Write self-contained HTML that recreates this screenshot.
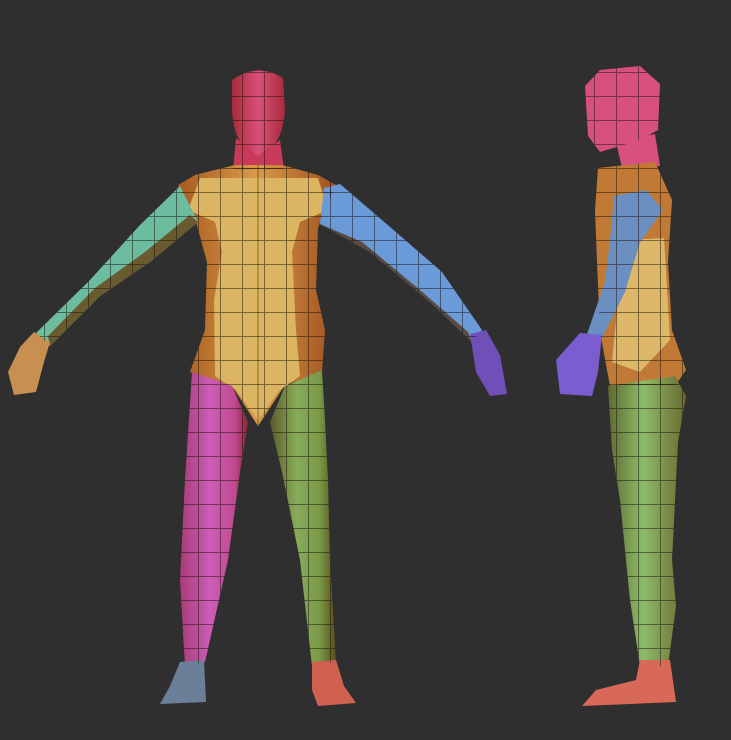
<!DOCTYPE html>
<html><head><meta charset="utf-8"><style>
html,body{margin:0;padding:0;background:#2f2f2f;}
svg{display:block;}
</style></head><body>
<svg width="731" height="740" viewBox="0 0 731 740" xmlns="http://www.w3.org/2000/svg">
<defs>
<pattern id="g" width="22" height="24" patternUnits="userSpaceOnUse">
<path d="M0 0.5H22M0.5 0V24" stroke="#1a1008" stroke-width="1" opacity="0.5" fill="none"/>
</pattern>
<linearGradient id="tor" x1="0" x2="1"><stop offset="0" stop-color="#a85a22"/><stop offset="0.5" stop-color="#d89a48"/><stop offset="1" stop-color="#a0501e"/></linearGradient>
<linearGradient id="mag" x1="0" x2="1"><stop offset="0" stop-color="#a83c78"/><stop offset="0.45" stop-color="#cc5cb8"/><stop offset="0.8" stop-color="#c04a90"/><stop offset="1" stop-color="#8a2432"/></linearGradient>
<linearGradient id="grn" x1="0" x2="1"><stop offset="0" stop-color="#5a5a2a"/><stop offset="0.4" stop-color="#88ac5a"/><stop offset="0.75" stop-color="#7a9a48"/><stop offset="1" stop-color="#5a4a1a"/></linearGradient>
<linearGradient id="sgrn" x1="0" x2="1"><stop offset="0" stop-color="#5e6a30"/><stop offset="0.45" stop-color="#8cbc6a"/><stop offset="1" stop-color="#6a6a2e"/></linearGradient>
<linearGradient id="hd" x1="0" x2="1"><stop offset="0" stop-color="#a82a3a"/><stop offset="0.5" stop-color="#d8507a"/><stop offset="1" stop-color="#a82a3a"/></linearGradient>
</defs>
<rect width="731" height="740" fill="#2f2f2f"/>
<g>
<path d="M232,80 Q258,62 283,78 L285,112 Q282,140 270,148 L258,156 L246,148 Q234,138 232,112 Z" fill="url(#hd)"/>
<path d="M236,138 L258,156 L280,140 L284,170 L233,170 Z" fill="#c83a58"/>
<path d="M178,185 L195,175 L235,165 L282,165 L318,175 L336,185 L325,210 L318,228 L316,290 L325,330 L322,372 L285,385 L258,426 L232,386 L190,372 L205,330 L207,262 L196,222 Z" fill="url(#tor)"/>
<path d="M200,178 L318,178 L328,210 L300,222 L292,252 L296,330 L300,376 L280,390 L258,420 L236,390 L215,376 L214,300 L222,252 L215,222 L188,210 Z" fill="#dcb562"/>
<path d="M180,186 L198,222 L150,262 L100,296 L50,346 L36,333 L90,280 L140,225 Z" fill="#6cbca0"/>
<path d="M198,222 L150,262 L100,296 L50,346 L48,336 L95,288 L145,252 L190,215 Z" fill="#6a5a30"/>
<path d="M34,332 L50,342 L44,362 L36,392 L14,395 L8,372 L20,347 Z" fill="#c89050"/>
<path d="M324,188 L340,184 L382,220 L442,272 L482,330 L472,342 L430,302 L370,252 L320,224 Z" fill="#6a9ad8"/>
<path d="M320,224 L370,252 L430,302 L472,342 L468,332 L420,290 L362,242 Z" fill="#5a4a40"/>
<path d="M470,334 L486,330 L500,355 L507,394 L490,396 L476,372 Z" fill="#7050b8"/>
<path d="M192,372 L232,386 L248,422 L240,472 L228,560 L205,662 L185,666 L180,580 L185,480 Z" fill="url(#mag)"/>
<path d="M180,662 L204,660 L206,702 L160,704 L170,686 Z" fill="#6b7f98"/>
<path d="M322,370 L325,420 L328,480 L330,560 L336,662 L312,666 L300,560 L282,472 L270,422 L285,386 Z" fill="url(#grn)"/>
<path d="M312,662 L336,660 L344,686 L356,703 L318,706 L312,690 Z" fill="#d06050"/>
<path d="M585,86 L600,70 L640,66 L660,84 L658,130 L640,140 L620,146 L600,152 L588,136 Z" fill="#d85080"/>
<path d="M616,142 L655,134 L660,166 L622,168 Z" fill="#d85080"/>
<path d="M598,168 L655,162 L672,200 L668,262 L672,330 L686,370 L675,386 L610,386 L600,332 L597,262 L595,210 Z" fill="#c07a36"/>
<path d="M628,240 L664,238 L670,340 L640,372 L612,362 L618,300 Z" fill="#dcb868"/>
<path d="M614,196 L646,190 L663,210 L640,242 L625,292 L600,342 L585,340 L605,282 L610,240 Z" fill="#6a8fc0"/>
<path d="M580,333 L602,335 L598,372 L592,396 L560,394 L556,360 Z" fill="#7a5ed0"/>
<path d="M608,386 L675,376 L686,396 L678,442 L672,560 L676,606 L668,666 L640,666 L630,600 L620,500 L612,450 Z" fill="url(#sgrn)"/>
<path d="M640,660 L670,660 L676,702 L582,706 L596,690 L636,680 Z" fill="#d86858"/>
</g>
<g fill="url(#g)">
<path d="M232,80 Q258,62 283,78 L285,112 Q282,140 270,148 L258,156 L246,148 Q234,138 232,112 Z"/>
<path d="M236,138 L258,156 L280,140 L284,170 L233,170 Z"/>
<path d="M178,185 L195,175 L235,165 L282,165 L318,175 L336,185 L325,210 L318,228 L316,290 L325,330 L322,372 L285,385 L258,426 L232,386 L190,372 L205,330 L207,262 L196,222 Z"/>
<path d="M180,186 L198,222 L150,262 L100,296 L50,346 L36,333 L90,280 L140,225 Z"/>
<path d="M324,188 L340,184 L382,220 L442,272 L482,330 L472,342 L430,302 L370,252 L320,224 Z"/>
<path d="M192,372 L232,386 L248,422 L240,472 L228,560 L205,662 L185,666 L180,580 L185,480 Z"/>
<path d="M322,370 L325,420 L328,480 L330,560 L336,662 L312,666 L300,560 L282,472 L270,422 L285,386 Z"/>
<path d="M585,86 L600,70 L640,66 L660,84 L658,130 L640,140 L620,146 L600,152 L588,136 Z"/>
<path d="M598,168 L655,162 L672,200 L668,262 L672,330 L686,370 L675,386 L610,386 L600,332 L597,262 L595,210 Z"/>
<path d="M608,386 L675,376 L686,396 L678,442 L672,560 L676,606 L668,666 L640,666 L630,600 L620,500 L612,450 Z"/>
</g>
<g fill="none" stroke="#2a1a08" stroke-width="1" opacity="0.5">
<line x1="258" y1="165" x2="258" y2="425"/>
</g>
</svg>
</body></html>
